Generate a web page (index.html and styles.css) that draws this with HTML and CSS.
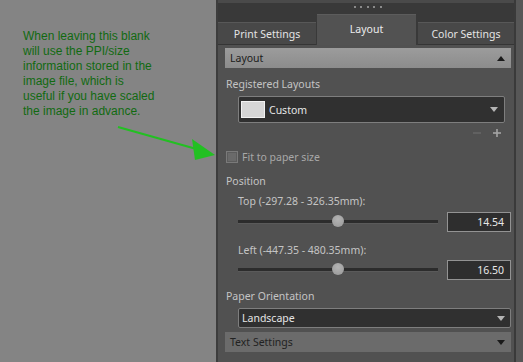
FILE: index.html
```html
<!DOCTYPE html>
<html>
<head>
<meta charset="utf-8">
<link rel="stylesheet" href="styles.css">
</head>
<body>
<div class="screen">
  <div class="note">When leaving this blank<br>will use the PPI/size<br>information stored in the<br>image file, which is<br>useful if you have scaled<br>the image in advance.</div>
  <div class="panel">
    <div class="panel-top"></div>
    <div class="tabbar">
      <div class="grip"><span></span><span></span><span></span><span></span><span></span></div>
      <div class="tabs">
        <div class="tab tab-print">Print Settings</div>
        <div class="tab tab-active">Layout</div>
        <div class="tab tab-color">Color Settings</div>
      </div>
    </div>
    <div class="content">
      <div class="section-bar section-layout"><span>Layout</span><span class="tri tri-up"></span></div>
      <div class="label label-reg">Registered Layouts</div>
      <div class="select select-custom">
        <span class="swatch"></span><span class="select-text">Custom</span><span class="tri tri-down-light"></span>
      </div>
      <div class="addrem">
        <svg width="28" height="10" viewBox="0 0 28 10" aria-label="remove / add">
          <line x1="0" y1="5" x2="8" y2="5" stroke="#666" stroke-width="1.6"/>
          <line x1="20" y1="5" x2="28" y2="5" stroke="#a4a4a4" stroke-width="1.6"/>
          <line x1="24" y1="1" x2="24" y2="9" stroke="#a4a4a4" stroke-width="1.6"/>
        </svg>
      </div>
      <div class="check-row"><span class="checkbox"></span><span class="check-text">Fit to paper size</span></div>
      <div class="label label-pos">Position</div>
      <div class="sublabel sub-top">Top (-297.28 - 326.35mm):</div>
      <div class="slider-row">
        <div class="track"><span class="knob"></span></div>
        <div class="num">14.54</div>
      </div>
      <div class="sublabel sub-left">Left (-447.35 - 480.35mm):</div>
      <div class="slider-row slider-row2">
        <div class="track"><span class="knob"></span></div>
        <div class="num">16.50</div>
      </div>
      <div class="label label-orient">Paper Orientation</div>
      <div class="select select-orient"><span class="select-text">Landscape</span><span class="tri tri-down-light"></span></div>
      <div class="section-bar section-text"><span>Text Settings</span><span class="tri tri-down-dark"></span></div>
    </div>
  </div>
  <div class="edge"></div>
  <svg class="arrow" width="523" height="362" viewBox="0 0 523 362">
    <line x1="118" y1="127" x2="200" y2="150" stroke="#22c022" stroke-width="2.2"/>
    <polygon points="215,155 192,139 195,160" fill="#22c022"/>
  </svg>
</div>
</body>
</html>
```

FILE: styles.css
```css
html, body {
  margin: 0;
  padding: 0;
}
body {
  width: 523px;
  height: 362px;
  overflow: hidden;
  background: #848484;
}
.screen {
  position: relative;
  display: flex;
  width: 523px;
  height: 362px;
}
.note {
  width: 193px;
  flex: none;
  padding: 29px 0 0 23px;
  font-family: "Liberation Sans", Arial, sans-serif;
  font-size: 12px;
  line-height: 14.9px;
  color: #116a11;
}
.panel {
  width: 296px;
  flex: none;
  border-left: 2px solid #3d3d3d;
  border-right: 2px solid #3a3a3a;
  background: #515151;
  display: flex;
  flex-direction: column;
  font-family: "Noto Sans", "Open Sans", sans-serif;
  font-size: 10.5px;
}
.edge {
  flex: 1;
  background: #575757;
}
.panel-top {
  height: 3px;
  background: #4a4a4a;
}
.tabbar {
  height: 42px;
  background: #393939;
  display: flex;
  flex-direction: column;
}
.grip {
  height: 11px;
  display: flex;
  justify-content: center;
  gap: 4.5px;
  padding-top: 3px;
  box-sizing: border-box;
  padding-left: 3px;
}
.grip span {
  width: 2px;
  height: 2px;
  background: #8a8a8a;
}
.tabs {
  height: 31px;
  display: flex;
  align-items: flex-end;
}
.tab {
  box-sizing: border-box;
  height: 23px;
  display: flex;
  align-items: center;
  justify-content: center;
  color: #e4e4e4;
  background: #484848;
  border-top: 1px solid #585858;
  border-bottom: 1px solid #353535;
  padding-top: 1px;
}
.tab-print {
  width: 98px;
  margin-right: 1px;
}
.tab-active {
  width: 99px;
  height: 31px;
  background: #525252;
  border-top: 1px solid #5c5c5c;
  border-bottom: none;
  margin-right: 2px;
  align-items: flex-start;
  padding-top: 7px;
  color: #ececec;
}
.tab-color {
  width: 96px;
}
.content {
  padding: 3px 3px 0 7px;
  display: flex;
  flex-direction: column;
}
.section-bar {
  height: 20px;
  box-sizing: border-box;
  display: flex;
  align-items: center;
  justify-content: space-between;
  padding: 0 6px 0 5px;
  color: #1c1c1c;
}
.section-layout {
  background: linear-gradient(#9c9c9c, #8c8c8c);
}
.section-text {
  margin-top: 4px;
  background: #6b6b6b;
  color: #222;
}
.tri {
  width: 0;
  height: 0;
  border-left: 4px solid transparent;
  border-right: 4px solid transparent;
}
.tri-up {
  border-bottom: 5px solid #1a1a1a;
}
.tri-down-dark {
  border-top: 5px solid #1a1a1a;
}
.tri-down-light {
  border-top: 5px solid #b4b4b4;
}
.label {
  height: 18px;
  line-height: 18px;
  color: #c4c4c4;
  padding-left: 1px;
}
.label-reg {
  margin-top: 7px;
}
.select {
  box-sizing: border-box;
  margin-left: 13px;
  background: #303030;
  border: 1px solid #7e7e7e;
  border-radius: 2px;
  display: flex;
  align-items: center;
  color: #e6e6e6;
}
.select-custom {
  margin-top: 3px;
  height: 27px;
  margin-right: 6px;
  padding: 0 6px 0 2px;
}
.swatch {
  width: 24px;
  height: 17px;
  box-sizing: border-box;
  background: #d6d6d6;
  border: 1px solid #f2f2f2;
  margin-right: 4px;
}
.select-text {
  flex: 1;
}
.addrem {
  height: 16px;
  margin-top: 2px;
  display: flex;
  justify-content: flex-end;
  align-items: center;
  padding-right: 10px;
}
.check-row {
  height: 20px;
  margin-top: 6px;
  display: flex;
  align-items: center;
  padding-left: 1px;
}
.checkbox {
  width: 12px;
  height: 12px;
  box-sizing: border-box;
  border: 1px solid #7a7a7a;
  background: #6a6a6a;
  box-shadow: inset 0 0 0 1px #5c5c5c;
  margin-right: 4px;
}
.check-text {
  color: #a8a8a8;
}
.label-pos {
  margin-top: 5px;
}
.sublabel {
  height: 18px;
  line-height: 18px;
  color: #c4c4c4;
  padding-left: 13px;
}
.sub-top {
  margin-top: 2px;
}
.sub-left {
  margin-top: 9px;
}
.slider-row {
  height: 20px;
  margin-top: 2px;
  display: flex;
  align-items: center;
  padding-left: 13px;
}
.slider-row2 {
  margin-top: 1px;
}
.track {
  position: relative;
  width: 200px;
  height: 3px;
  background: #2c2c2c;
  border-bottom: 1px solid #5a5a5a;
  margin-right: 9px;
}
.knob {
  position: absolute;
  left: 94px;
  top: -5px;
  width: 12px;
  height: 12px;
  border-radius: 50%;
  background: radial-gradient(circle at 50% 35%, #b4b4b4, #979797);
}
.num {
  box-sizing: border-box;
  width: 64px;
  height: 20px;
  background: #2e2e2e;
  border: 1px solid #939393;
  color: #e8e8e8;
  text-align: right;
  line-height: 18px;
  padding-right: 6px;
}
.label-orient {
  margin-top: 7px;
}
.select-orient {
  margin-top: 3px;
  height: 20px;
  padding: 0 5px 0 3px;
}
.arrow {
  position: absolute;
  left: 0;
  top: 0;
  pointer-events: none;
}
```
